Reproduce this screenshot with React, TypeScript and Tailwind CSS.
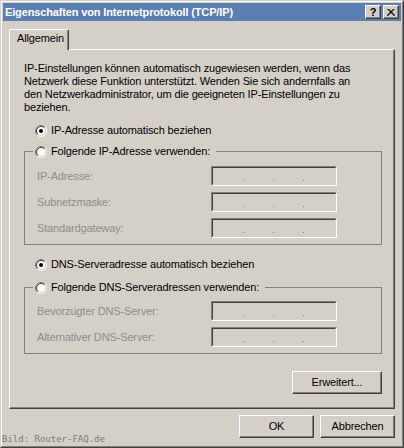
import React from "react";

function Radio({ checked }: { checked?: boolean }) {
  return (
    <svg width="12" height="12" viewBox="0 0 12 12" className="shrink-0 block">
      <circle cx="6" cy="6" r="4.5" fill="#ffffff" />
      <path d="M2.11 9.89 A5.5 5.5 0 0 1 9.89 2.11" stroke="#808080" strokeWidth="1" fill="none" />
      <path d="M9.89 2.11 A5.5 5.5 0 0 1 2.11 9.89" stroke="#ffffff" strokeWidth="1" fill="none" />
      <path d="M2.82 9.18 A4.5 4.5 0 0 1 9.18 2.82" stroke="#404040" strokeWidth="1" fill="none" />
      <path d="M9.18 2.82 A4.5 4.5 0 0 1 2.82 9.18" stroke="#d4d0c8" strokeWidth="1" fill="none" />
      {checked && <circle cx="6" cy="6" r="2" fill="#000000" />}
    </svg>
  );
}

function IpBox() {
  return (
    <div className="w-[126px] h-[20px] border border-t-[#808080] border-l-[#808080] border-r-white border-b-white">
      <div className="h-full border border-t-[#404040] border-l-[#404040] border-r-[#d4d0c8] border-b-[#d4d0c8] flex items-end pl-[30px] pb-[3px] gap-[29px]">
        <div className="w-[1px] h-[1px] bg-[#808080]" />
        <div className="w-[1px] h-[1px] bg-[#808080]" />
        <div className="w-[1px] h-[1px] bg-[#808080]" />
      </div>
    </div>
  );
}

function FieldRow({ label }: { label: string }) {
  return (
    <div className="flex items-center h-[20px]">
      <div className="w-[174px] text-[#8c8c8c] leading-[13px]">{label}</div>
      <IpBox />
    </div>
  );
}

function WinButton({ children, className }: { children: React.ReactNode; className?: string }) {
  return (
    <div
      className={
        "h-[23px] flex items-center justify-center border border-t-white border-l-white border-r-[#404040] border-b-[#404040] shadow-[inset_-1px_-1px_0_#808080] leading-[13px] " +
        (className ?? "")
      }
    >
      {children}
    </div>
  );
}

function Group({ legend, rows, pt }: { legend: string; rows: string[]; pt: string }) {
  return (
    <fieldset className={"border border-[#808080] pb-[6px] " + pt}>
      <legend className="ml-[8px] pl-[2px] pr-[6px]">
        <div className="flex items-center gap-[4px] h-[13px] leading-[13px]">
          <Radio />
          <span>{legend}</span>
        </div>
      </legend>
      <div className="flex flex-col gap-[6px] pl-[12px]">
        {rows.map((r) => (
          <FieldRow key={r} label={r} />
        ))}
      </div>
    </fieldset>
  );
}

export default function App() {
  return (
    <div className="w-[404px] h-[448px] relative bg-[#d4d0c8] border border-t-[#d4d0c8] border-l-[#d4d0c8] border-r-[#404040] border-b-[#404040] font-['Liberation_Sans',Arial,sans-serif] text-[11px] tracking-[-0.14px] text-black overflow-hidden">
      <div className="h-full border border-t-white border-l-white border-r-[#808080] border-b-[#808080] p-[1px] flex flex-col">
        {/* Title bar */}
        <div className="h-[18px] bg-[#5b7eb3] flex items-center justify-between pl-[2px] pr-[2px]">
          <span className="text-white font-bold text-[11px] leading-[13px] whitespace-nowrap">
            Eigenschaften von Internetprotokoll (TCP/IP)
          </span>
          <div className="flex gap-[2px]">
            <div className="w-[16px] h-[14px] bg-[#d4d0c8] border border-t-white border-l-white border-r-[#404040] border-b-[#404040] shadow-[inset_-1px_-1px_0_#808080] flex items-center justify-center">
              <span className="font-bold text-[11px] leading-[11px] text-black">?</span>
            </div>
            <div className="w-[16px] h-[14px] bg-[#d4d0c8] border border-t-white border-l-white border-r-[#404040] border-b-[#404040] shadow-[inset_-1px_-1px_0_#808080] flex items-center justify-center">
              <svg width="8" height="7" viewBox="0 0 8 7" className="block">
                <path d="M0.5 0 L7.5 7 M1.5 0 L8.5 7 M7.5 0 L0.5 7 M6.5 0 L-0.5 7" stroke="#000" strokeWidth="1" />
              </svg>
            </div>
          </div>
        </div>

        {/* Body */}
        <div className="flex-1 flex flex-col px-[6px] pt-[8px]">
          {/* Tab strip */}
          <div className="flex">
            <div className="relative z-10 -mb-[1px] w-[60px] h-[21px] bg-[#d4d0c8] border-t border-l border-t-white border-l-white border-r border-r-[#404040] shadow-[inset_-1px_0_0_#808080] rounded-tl-[2px] rounded-tr-[2px] pl-[7px] pt-[2px] leading-[13px]">
              Allgemein
            </div>
          </div>

          {/* Tab panel */}
          <div className="w-[386px] h-[360px] border border-t-white border-l-white border-r-[#404040] border-b-[#404040] shadow-[inset_-1px_-1px_0_#808080] pt-[12px] pl-[14px] pr-[12px] pb-[13px] flex flex-col">
            <div className="leading-[13px] whitespace-nowrap">
              <div>IP-Einstellungen können automatisch zugewiesen werden, wenn das</div>
              <div>Netzwerk diese Funktion unterstützt. Wenden Sie sich andernfalls an</div>
              <div>den Netzwerkadministrator, um die geeigneten IP-Einstellungen zu</div>
              <div>beziehen.</div>
            </div>

            <div className="mt-[10px] h-[13px] flex items-center pl-[11px] gap-[4px] leading-[13px]">
              <Radio checked />
              <span>IP-Adresse automatisch beziehen</span>
            </div>

            <div className="mt-[8px]">
              <Group
                legend="Folgende IP-Adresse verwenden:"
                rows={["IP-Adresse:", "Subnetzmaske:", "Standardgateway:"]}
                pt="pt-[8px]"
              />
            </div>

            <div className="mt-[13px] h-[13px] flex items-center pl-[11px] gap-[4px] leading-[13px]">
              <Radio checked />
              <span>DNS-Serveradresse automatisch beziehen</span>
            </div>

            <div className="mt-[10px]">
              <Group
                legend="Folgende DNS-Serveradressen verwenden:"
                rows={["Bevorzugter DNS-Server:", "Alternativer DNS-Server:"]}
                pt="pt-[7px]"
              />
            </div>

            <div className="mt-[17px] flex justify-end">
              <WinButton className="w-[90px]">Erweitert...</WinButton>
            </div>
          </div>

          {/* Dialog buttons */}
          <div className="mt-[6px] flex justify-end gap-[6px]">
            <WinButton className="w-[75px]">OK</WinButton>
            <WinButton className="w-[75px]">Abbrechen</WinButton>
          </div>
        </div>
      </div>

      <div className="absolute left-[1px] top-[432px] font-['DejaVu_Sans_Mono',monospace] text-[9px] leading-[12px] tracking-normal text-[#7a7a7a] whitespace-nowrap">
        Bild: Router-FAQ.de
      </div>
    </div>
  );
}
